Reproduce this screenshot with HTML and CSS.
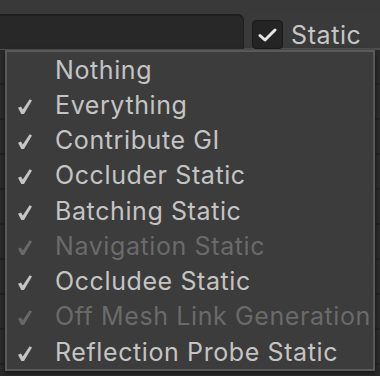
FILE: index.html
```html
<!DOCTYPE html>
<html>
<head>
  <link rel="stylesheet" href="styles.css">
</head>
<body>
  <div class="inspector">
    <div class="top-strip"></div>
    <div class="header-row">
      <div class="name-field"></div>
      <div class="static-toggle">
        <span class="checkbox">
          <svg width="20" height="16" viewBox="0 0 20 16"><path d="M2 8.5 L7 13 L17 3" fill="none" stroke="#e6e6e6" stroke-width="3" stroke-linecap="round" stroke-linejoin="round"/></svg>
        </span>
        <span class="static-label">Static</span>
      </div>
    </div>
    <div class="panel">
      <div class="panel-row"></div>
      <div class="panel-row"></div>
      <div class="panel-row"></div>
      <div class="panel-row"></div>
      <div class="panel-row"></div>
      <div class="panel-row"></div>
      <div class="panel-row"></div>
      <div class="panel-row"></div>
      <div class="panel-row"></div>
    </div>

    <ul class="flags-menu">
      <li class="item"><span class="mark"></span>Nothing</li>
      <li class="item checked"><span class="mark"><svg width="16" height="17" viewBox="0 0 16 17"><path d="M1 9.8 L4 8.6 L5.8 11.6 L12.6 1.2 L15 2.4 L7 16 L4.3 16 Z" fill="#c4c4c4"/></svg></span>Everything</li>
      <li class="item checked"><span class="mark"><svg width="16" height="17" viewBox="0 0 16 17"><path d="M1 9.8 L4 8.6 L5.8 11.6 L12.6 1.2 L15 2.4 L7 16 L4.3 16 Z" fill="#c4c4c4"/></svg></span>Contribute GI</li>
      <li class="item checked"><span class="mark"><svg width="16" height="17" viewBox="0 0 16 17"><path d="M1 9.8 L4 8.6 L5.8 11.6 L12.6 1.2 L15 2.4 L7 16 L4.3 16 Z" fill="#c4c4c4"/></svg></span>Occluder Static</li>
      <li class="item checked"><span class="mark"><svg width="16" height="17" viewBox="0 0 16 17"><path d="M1 9.8 L4 8.6 L5.8 11.6 L12.6 1.2 L15 2.4 L7 16 L4.3 16 Z" fill="#c4c4c4"/></svg></span>Batching Static</li>
      <li class="item checked disabled"><span class="mark"><svg width="16" height="17" viewBox="0 0 16 17"><path d="M1 9.8 L4 8.6 L5.8 11.6 L12.6 1.2 L15 2.4 L7 16 L4.3 16 Z" fill="#686868"/></svg></span>Navigation Static</li>
      <li class="item checked"><span class="mark"><svg width="16" height="17" viewBox="0 0 16 17"><path d="M1 9.8 L4 8.6 L5.8 11.6 L12.6 1.2 L15 2.4 L7 16 L4.3 16 Z" fill="#c4c4c4"/></svg></span>Occludee Static</li>
      <li class="item checked disabled"><span class="mark"><svg width="16" height="17" viewBox="0 0 16 17"><path d="M1 9.8 L4 8.6 L5.8 11.6 L12.6 1.2 L15 2.4 L7 16 L4.3 16 Z" fill="#686868"/></svg></span>Off Mesh Link Generation</li>
      <li class="item checked"><span class="mark"><svg width="16" height="17" viewBox="0 0 16 17"><path d="M1 9.8 L4 8.6 L5.8 11.6 L12.6 1.2 L15 2.4 L7 16 L4.3 16 Z" fill="#c4c4c4"/></svg></span>Reflection Probe Static</li>
    </ul>
  </div>
</body>
</html>
```

FILE: styles.css
```css
* {
  box-sizing: border-box;
}

body {
  margin: 0;
  background: #1c1c1c;
  font-family: Inter, "Noto Sans", sans-serif;
}

.inspector {
  position: relative;
  width: 380px;
  height: 376px;
  background: #3a3a3a;
  overflow: hidden;
}

.top-strip {
  height: 14px;
  background: #393939;
}

.header-row {
  display: flex;
  align-items: flex-start;
  height: 36px;
  border-bottom: 2px solid #4e4e4e;
}

.name-field {
  width: 244px;
  height: 35px;
  background: #282828;
  border-top: 2px solid #1d1d1d;
  border-right: 1px solid #1f1f1f;
  border-top-right-radius: 6px;
}

.static-toggle {
  display: flex;
  align-items: center;
  gap: 8px;
  margin-left: 8px;
  margin-top: 6px;
}

.checkbox {
  display: flex;
  align-items: center;
  justify-content: center;
  width: 31px;
  height: 29px;
  background: #242424;
  border: 1px solid #1a1a1a;
  border-radius: 4px;
}

.static-label {
  font-size: 25px;
  letter-spacing: 0.6px;
  color: #c6c6c6;
  line-height: 28px;
}

.panel {
  background: #2a2a2a;
  height: 326px;
}

.panel-row {
  height: 35px;
  border-bottom: 2px solid #222;
}

.flags-menu {
  position: absolute;
  left: 5px;
  top: 50px;
  width: 370px;
  height: 321px;
  margin: 0;
  padding: 0;
  list-style: none;
  background: #3c3c3c;
  border: 2px solid #595959;
  box-shadow: 0 2px 4px rgba(0, 0, 0, 0.5);
}

.item {
  display: flex;
  align-items: center;
  height: 35.25px;
  font-size: 25px;
  letter-spacing: 0.6px;
  color: #c4c4c4;
  white-space: nowrap;
}

.item.disabled {
  color: #6a6a6a;
}

.mark {
  display: flex;
  align-items: center;
  width: 48px;
  padding-left: 10px;
  padding-top: 3px;
}
```
